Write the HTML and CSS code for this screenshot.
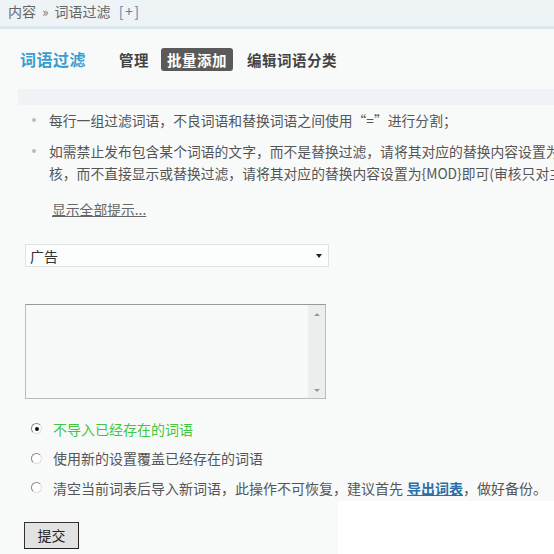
FILE: index.html
```html
<!DOCTYPE html>
<html lang="zh-CN">
<head>
  <meta charset="UTF-8" />
  <title>词语过滤</title>
  <link rel="stylesheet" href="styles.css">
</head>
<body>
  <div class="crumb">内容 <span class="sep">»</span> 词语过滤 <a class="add">[+]</a></div>
  <div class="main">
    <div class="tabs">
      <h2>词语过滤</h2>
      <a class="tab">管理</a>
      <a class="tab current">批量添加</a>
      <a class="tab">编辑词语分类</a>
    </div>
    <div class="tipbar"></div>
    <ul class="tips">
      <li>每行一组过滤词语，不良词语和替换词语之间使用“=”进行分割；</li>
      <li>如需禁止发布包含某个词语的文字，而不是替换过滤，请将其对应的替换内容设置为{BANNED}即可；如需当用户发布包含某个词语的文字时，自动标记为需要人工审<br>核，而不直接显示或替换过滤，请将其对应的替换内容设置为{MOD}即可(审核只对主题和回复有效)；</li>
    </ul>
    <a class="more">显示全部提示...</a>
    <div class="select">
      <span>广告</span>
      <i class="caret"></i>
    </div>
    <div class="textarea">
      <div class="scroll">
        <i class="up"></i>
        <i class="down"></i>
      </div>
    </div>
    <ul class="opts">
      <li class="on"><span class="radio"><i></i></span>不导入已经存在的词语</li>
      <li><span class="radio"></span>使用新的设置覆盖已经存在的词语</li>
      <li><span class="radio"></span>清空当前词表后导入新词语，此操作不可恢复，建议首先 <a class="export">导出词表</a>，做好备份。</li>
    </ul>
    <div class="foot">
      <button class="btn">提交</button>
      <div class="blank"></div>
    </div>
  </div>
</body>
</html>
```

FILE: styles.css
```css
body {
  margin: 0;
  background: #f8fafa;
  font-family: "Noto Sans CJK SC", "DejaVu Sans", sans-serif;
  color: #555;
  overflow: hidden;
  height: 554px;
}
.crumb {
  height: 26px;
  line-height: 22px;
  padding-left: 8px;
  font-size: 14px;
  color: #666;
  background: #eef3f5;
  border-bottom: 3px solid #dbe8ef;
}
.crumb .sep { font-size: 13px; margin: 0 3px; color: #777; }
.crumb .add { color: #4a86b8; margin-left: 5px; letter-spacing: 1.5px; }
.main {
  padding: 0 0 0 18px;
}
.tabs {
  display: flex;
  align-items: center;
  height: 60px;
  padding-left: 2px;
}
.tabs h2 {
  margin: 0 31px 0 0;
  font-size: 16px;
  color: #3a9dcf;
  letter-spacing: 0.5px;
}
.tab {
  font-size: 14.5px;
  font-weight: bold;
  color: #444;
  padding: 1px 6px;
  margin-right: 2px;
  border-radius: 3px;
  letter-spacing: 0.5px;
  line-height: 21px;
}
.tab:first-of-type { padding-left: 2px; margin-right: 6px; }
.tab.current {
  background: #5a5a5a;
  color: #fff;
  margin-right: 8px;
}
.tipbar {
  height: 16px;
  background: #eff3f5;
}
.tips {
  list-style: none;
  margin: 4px 0 0;
  padding: 0 0 0 14px;
  font-size: 13.8px;
  line-height: 22px;
  white-space: nowrap;
}
.tips li {
  position: relative;
  padding-left: 17px;
  margin-bottom: 9px;
}
.tips li::before {
  content: "";
  position: absolute;
  left: 0;
  top: 9px;
  width: 4px;
  height: 4px;
  border-radius: 50%;
  background: #bbb;
}
.more {
  display: inline-block;
  margin: 6px 0 0 34px;
  font-size: 13.8px;
  color: #666;
  text-decoration: underline;
  line-height: 20px;
}
.select {
  display: flex;
  align-items: center;
  justify-content: space-between;
  width: 298px;
  height: 21px;
  margin: 24px 0 0 7px;
  padding: 0 0 0 4px;
  border: 1px solid #e0e3e4;
  background: #fcfdfd;
  font-size: 14px;
  color: #333;
  box-sizing: content-box;
}
.caret {
  width: 0;
  height: 0;
  border-left: 3px solid transparent;
  border-right: 3px solid transparent;
  border-top: 4px solid #222;
  margin-right: 6px;
}
.textarea {
  display: flex;
  justify-content: flex-end;
  width: 299px;
  height: 93px;
  margin: 37px 0 0 7px;
  border: 1px solid #b8bcbc;
  border-top-color: #999;
  background: #f7f8f8;
}
.scroll {
  width: 17px;
  background: #eceeee;
  display: flex;
  flex-direction: column;
  justify-content: space-between;
  align-items: center;
  padding: 8px 0 6px;
}
.scroll i {
  width: 0;
  height: 0;
  border-left: 3px solid transparent;
  border-right: 3px solid transparent;
}
.scroll .up { border-bottom: 3px solid #999; }
.scroll .down { border-top: 3px solid #999; }
.opts {
  list-style: none;
  margin: 15px 0 0;
  padding: 0 0 0 13px;
  font-size: 14px;
  color: #555;
}
.opts li {
  display: flex;
  align-items: center;
  height: 29.5px;
  white-space: nowrap;
}
.opts li.on { color: #3fc73f; }
.radio {
  width: 9px;
  height: 9px;
  border-radius: 50%;
  border: 1px solid #888;
  border-right-color: #ddd;
  border-bottom-color: #ddd;
  margin-right: 11px;
  display: flex;
  align-items: center;
  justify-content: center;
  background: #fff;
}
.radio i {
  width: 4px;
  height: 4px;
  border-radius: 50%;
  background: #111;
}
.export {
  color: #2b6fa8;
  font-weight: bold;
  text-decoration: underline;
  margin-left: 4px;
}
.foot {
  display: flex;
  align-items: flex-start;
  margin-top: -2px;
}
.btn {
  margin: 21px 0 0 6px;
  width: 55px;
  height: 27px;
  background: #e2e2e2;
  border: 1px solid #333;
  border-right-color: #222;
  border-bottom-color: #222;
  font-family: inherit;
  font-size: 14px;
  color: #222;
  padding: 0;
}
.blank {
  margin-left: auto;
  width: 214px;
  height: 60px;
  background: #fff;
  border-right: 2px solid #fff;
}
```
